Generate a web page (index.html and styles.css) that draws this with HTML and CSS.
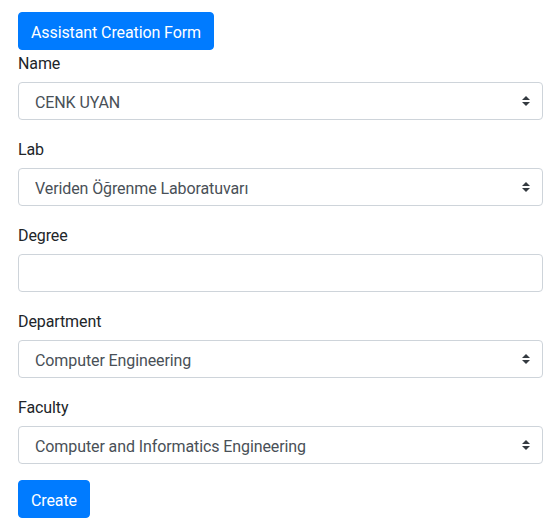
FILE: index.html
```html
<!DOCTYPE html>
<html lang="en">
<head>
<meta charset="utf-8">
<title>Assistant Creation Form</title>
<link rel="stylesheet" href="styles.css">
</head>
<body>
<div class="page">
  <button class="btn btn-primary" type="button">Assistant Creation Form</button>
  <form class="form">
    <div class="form-group">
      <label class="label" for="name">Name</label>
      <select id="name" class="custom-select">
        <option>CENK UYAN</option>
      </select>
    </div>
    <div class="form-group">
      <label class="label" for="lab">Lab</label>
      <select id="lab" class="custom-select">
        <option>Veriden Öğrenme Laboratuvarı</option>
      </select>
    </div>
    <div class="form-group">
      <label class="label" for="degree">Degree</label>
      <input id="degree" class="form-control" type="text">
    </div>
    <div class="form-group">
      <label class="label" for="department">Department</label>
      <select id="department" class="custom-select">
        <option>Computer Engineering</option>
      </select>
    </div>
    <div class="form-group">
      <label class="label" for="faculty">Faculty</label>
      <select id="faculty" class="custom-select">
        <option>Computer and Informatics Engineering</option>
      </select>
    </div>
    <button class="btn btn-primary" type="submit">Create</button>
  </form>
</div>
</body>
</html>
```

FILE: styles.css
```css
* { box-sizing: border-box; }
html, body { margin: 0; }
body {
  font-family: Roboto, "Helvetica Neue", Arial, "Noto Sans", sans-serif;
  font-size: 16px;
  line-height: 1.5;
  letter-spacing: -0.1px;
  color: #212529;
  background: #fff;
}
.page {
  padding: 12px 14px 0 18px;
}
.form { margin: 0; }
.btn {
  display: inline-block;
  font-family: inherit;
  font-size: 16px;
  line-height: 1.5;
  letter-spacing: -0.1px;
  font-weight: 400;
  padding: 8px 12px 4px;
  border: 1px solid transparent;
  border-radius: 4px;
  cursor: pointer;
}
.btn-primary {
  color: #fff;
  background-color: #007bff;
  border-color: #007bff;
}
.form-group { margin-bottom: 16px; }
.label {
  display: inline-block;
  padding-top: 2px;
  margin-bottom: 6px;
}
.custom-select,
.form-control {
  display: block;
  width: 100%;
  height: 38px;
  font-family: inherit;
  font-size: 16px;
  line-height: 1.5;
  letter-spacing: -0.1px;
  font-weight: 400;
  color: #495057;
  background-color: #fff;
  border: 1px solid #ced4da;
  border-radius: 4px;
  margin: 0;
}
.form-control { padding: 8px 16px 4px; }
.custom-select {
  padding: 8px 28px 4px 16px;
  appearance: none;
  -webkit-appearance: none;
  background: #fff url("data:image/svg+xml,%3csvg xmlns='http://www.w3.org/2000/svg' width='4' height='5' viewBox='0 0 4 5'%3e%3cpath fill='%23343a40' d='M2 0L0 2h4zm0 5L0 3h4z'/%3e%3c/svg%3e") no-repeat right 12px center / 8px 10px;
}
```
